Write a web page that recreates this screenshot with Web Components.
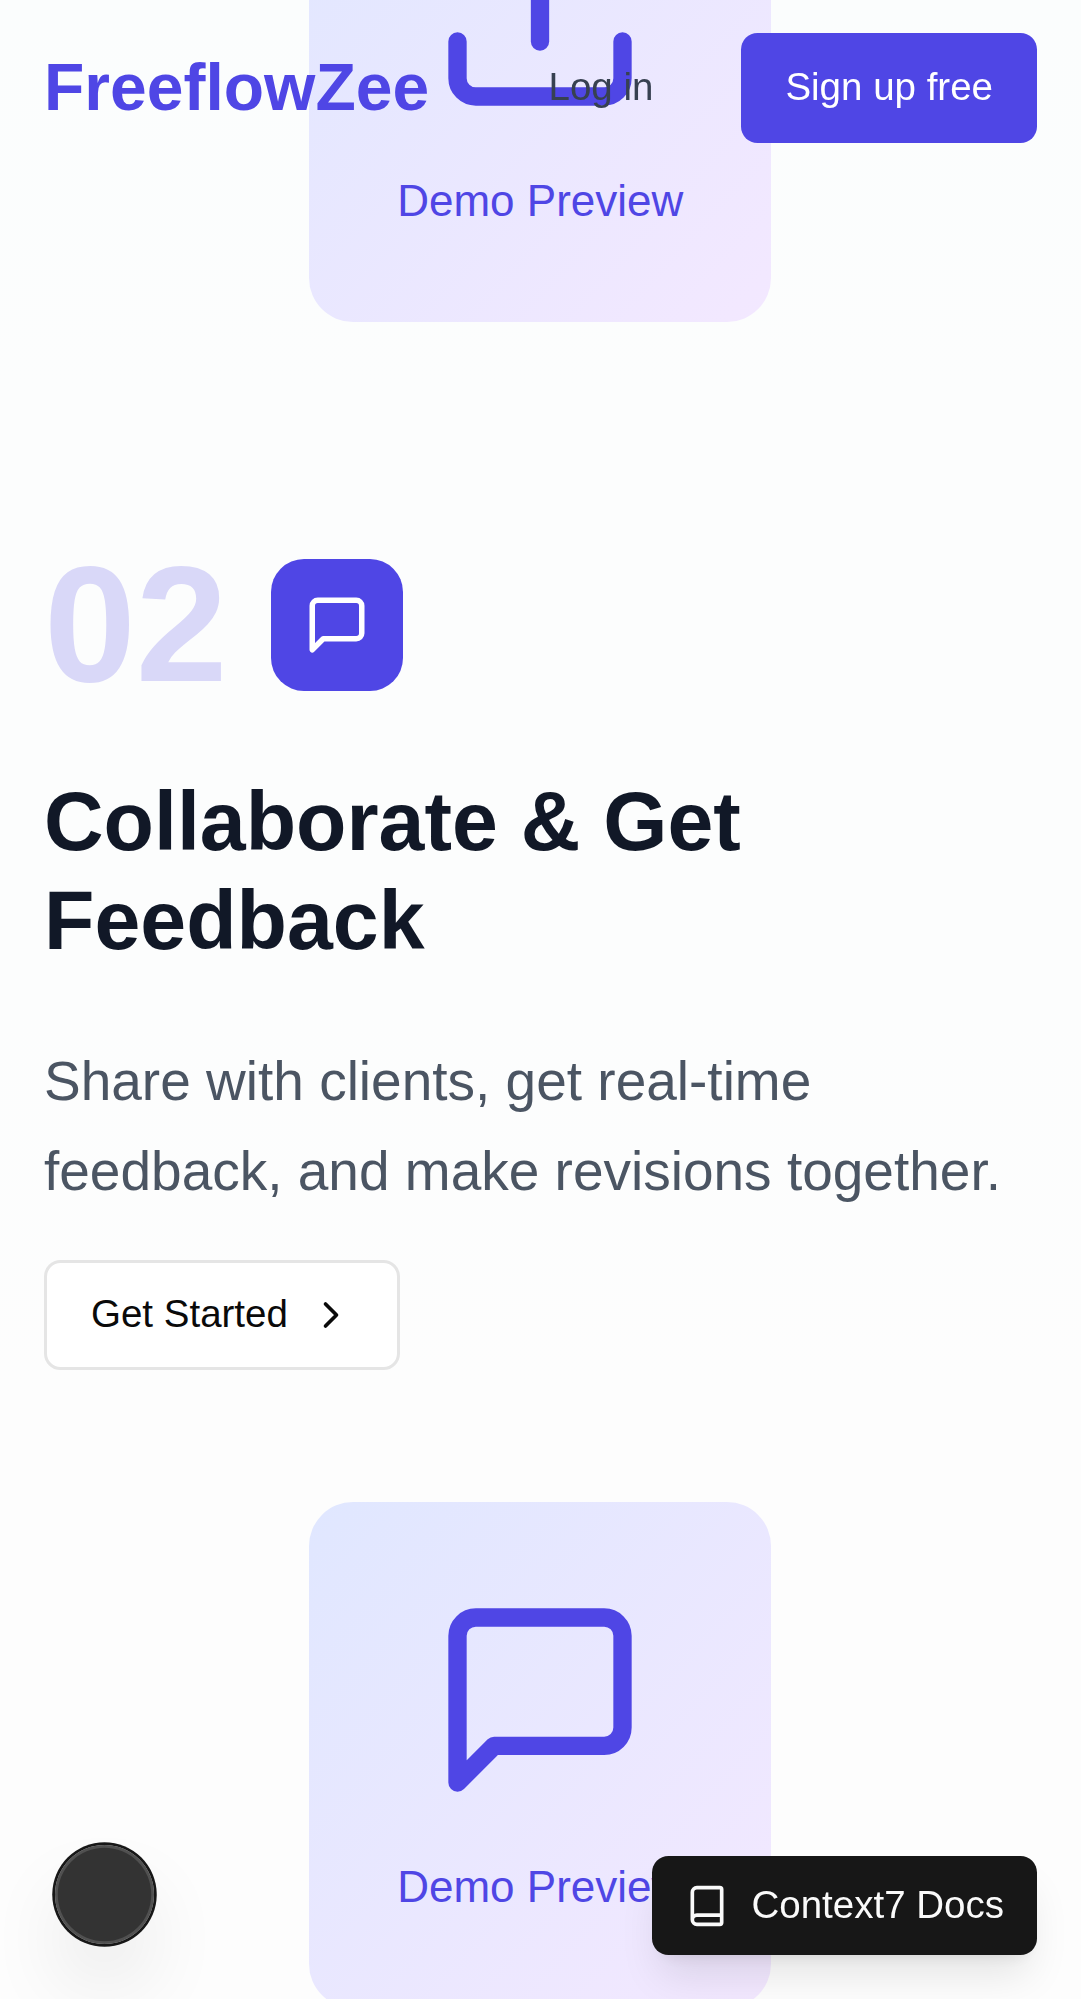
<!DOCTYPE html>
<html lang="en">
<head>
<meta charset="utf-8">
<title>FreeflowZee</title>
<style>
  html, body { margin: 0; height: 1999px; overflow: hidden; }
  body {
    font-family: "Liberation Sans", Arial, sans-serif;
    font-size: 44px;
    line-height: 66px;
    color: #0a0a0a;
    background: linear-gradient(180deg, #fbfdfd 0%, #fcfdfd 20%, #fcfdfd 50%, #fdfdfd 70%, #fdfdfd 100%);
  }
</style>
</head>
<body>
<ff-page>
  <ff-nav slot="nav" brand="FreeflowZee">
    <ff-button variant="ghost">Log in</ff-button>
    <ff-button variant="primary">Sign up free</ff-button>
  </ff-nav>
  <ff-demo icon="upload">Demo Preview</ff-demo>
  <ff-step number="02" icon="message">
    <span slot="title">Collaborate &amp; Get Feedback</span>
    <span slot="text">Share with clients, get real-time feedback, and make revisions together.</span>
    <ff-button slot="action" variant="outline">Get Started<ff-icon slot="end" name="chevron"></ff-icon></ff-button>
  </ff-step>
  <ff-demo icon="message">Demo Preview</ff-demo>
  <ff-indicator slot="floating"></ff-indicator>
  <ff-button slot="floating" variant="docs"><ff-icon slot="start" name="book"></ff-icon>Context7 Docs</ff-button>
</ff-page>
<script>
const ICONS = {
  upload: '<path d="M21 15v4a2 2 0 0 1-2 2H5a2 2 0 0 1-2-2v-4"/><path d="m17 8-5-5-5 5"/><path d="M12 3v12"/>',
  message: '<path d="M21 15a2 2 0 0 1-2 2H7l-4 4V5a2 2 0 0 1 2-2h14a2 2 0 0 1 2 2z"/>',
  chevron: '<path d="m9 18 6-6-6-6"/>',
  book: '<path d="M4 19.5v-15A2.5 2.5 0 0 1 6.5 2H19a1 1 0 0 1 1 1v18a1 1 0 0 1-1 1H6.5a1 1 0 0 1 0-5H20"/>'
};

class Base extends HTMLElement {
  connectedCallback() {
    if (this.shadowRoot) return;
    const t = document.createElement('template');
    t.innerHTML = this.render();
    this.attachShadow({ mode: 'open' }).append(t.content.cloneNode(true));
  }
}

customElements.define('ff-icon', class extends Base {
  render() {
    return `<style>
      :host { display: block; flex: none; width: var(--icon-size, 44px); height: var(--icon-size, 44px); }
      svg { display: block; width: 100%; height: 100%; }
    </style>
    <svg viewBox="0 0 24 24" fill="none" stroke="currentColor" stroke-width="2" stroke-linecap="round" stroke-linejoin="round">${ICONS[this.getAttribute('name')]}</svg>`;
  }
});

customElements.define('ff-button', class extends Base {
  render() {
    return `<style>
      :host { display: block; flex: none; }
      button {
        display: flex; align-items: center; justify-content: center; gap: 22px;
        box-sizing: border-box; height: 110px; margin: 0; padding: 0 44px;
        border: 0; border-radius: 16.5px; background: none; color: inherit;
        font: 38.5px/55px "Liberation Sans", Arial, sans-serif; white-space: nowrap;
      }
      span { padding-bottom: 3px; }
      :host([variant=ghost]) button { color: #374151; }
      :host([variant=primary]) button { background: #4f46e5; color: #fff; }
      :host([variant=outline]) button { gap: 21px; background: #fff; color: #0a0a0a; border: 3px solid #e5e5e5; }
      :host([variant=docs]) button {
        height: 99px; padding: 0 33px; background: #171717; color: #fafafa;
        box-shadow: 0 27.5px 41.25px -8.25px rgba(0,0,0,.1), 0 11px 16.5px -11px rgba(0,0,0,.1);
      }
    </style>
    <button><slot name="start"></slot><span><slot></slot></span><slot name="end"></slot></button>`;
  }
});

customElements.define('ff-nav', class extends Base {
  render() {
    return `<style>
      :host { display: block; }
      nav { display: flex; align-items: center; justify-content: space-between; padding: 33px 44px; }
      .brand { font-size: 66px; line-height: 88px; padding-bottom: 2px; font-weight: 700; color: #4f46e5; }
      .actions { display: flex; align-items: center; gap: 44px; }
    </style>
    <nav><div class="brand">${this.getAttribute('brand')}</div><div class="actions"><slot></slot></div></nav>`;
  }
});

customElements.define('ff-demo', class extends Base {
  render() {
    return `<style>
      :host { display: flex; justify-content: center; padding-right: .5px; }
      .card {
        display: flex; flex-direction: column; align-items: center; gap: 44px;
        box-sizing: border-box; width: 462px; height: 506px; padding: 88px 0;
        border-radius: 44px; color: #4f46e5;
        background: linear-gradient(to bottom right, #e0e7ff, #f3e8ff);
        --icon-size: 220px;
      }
      .label { line-height: 66px; white-space: nowrap; }
    </style>
    <div class="card"><ff-icon name="${this.getAttribute('icon')}"></ff-icon><div class="label"><slot></slot></div></div>`;
  }
});

customElements.define('ff-step', class extends Base {
  render() {
    return `<style>
      :host { display: flex; flex-direction: column; padding: 220px 44px 132px; }
      .head { display: flex; align-items: center; gap: 43.5px; margin-bottom: 64.5px; }
      .num { font-size: 165px; line-height: 165px; font-weight: 700; color: rgba(79,70,229,.2); }
      .badge {
        display: flex; align-items: center; justify-content: center;
        width: 132px; height: 132px; border-radius: 33px; background: #4f46e5; color: #fff;
        --icon-size: 66px;
      }
      h3 { margin: 0 0 66px; font-size: 82.5px; line-height: 99px; font-weight: 700; color: #111827; }
      p { margin: 0 0 44.5px; font-size: 55px; line-height: 90px; color: #4b5563; }
      .action { display: flex; }
    </style>
    <div class="head"><div class="num">${this.getAttribute('number')}</div><div class="badge"><ff-icon name="${this.getAttribute('icon')}"></ff-icon></div></div>
    <h3><slot name="title"></slot></h3>
    <p><slot name="text"></slot></p>
    <div class="action"><slot name="action"></slot></div>`;
  }
});

customElements.define('ff-indicator', class extends Base {
  render() {
    return `<style>
      :host {
        display: block; width: 99px; height: 99px; margin: 0 0 11px 11px; border-radius: 50%;
        background: rgba(0,0,0,.8);
        box-shadow: 0 0 0 2.75px #171717, inset 0 0 0 2.75px rgba(255,255,255,.14), 0 44px 88px -22px rgba(0,0,0,.24);
      }
    </style>`;
  }
});

customElements.define('ff-page', class extends Base {
  render() {
    return `<style>
      :host { display: block; height: 1999px; overflow: hidden; }
      main { display: flow-root; }
      /* the page is scrolled part-way through the first step */
      .flow { margin-top: -184px; }
      .nav { position: fixed; top: 0; left: 0; right: 0; z-index: 2; }
      .floating {
        position: fixed; left: 44px; right: 44px; bottom: 44px; z-index: 2;
        display: flex; justify-content: space-between; align-items: flex-end;
      }
    </style>
    <div class="nav"><slot name="nav"></slot></div>
    <main><div class="flow"><slot></slot></div></main>
    <div class="floating"><slot name="floating"></slot></div>`;
  }
});
</script>
</body>
</html>
